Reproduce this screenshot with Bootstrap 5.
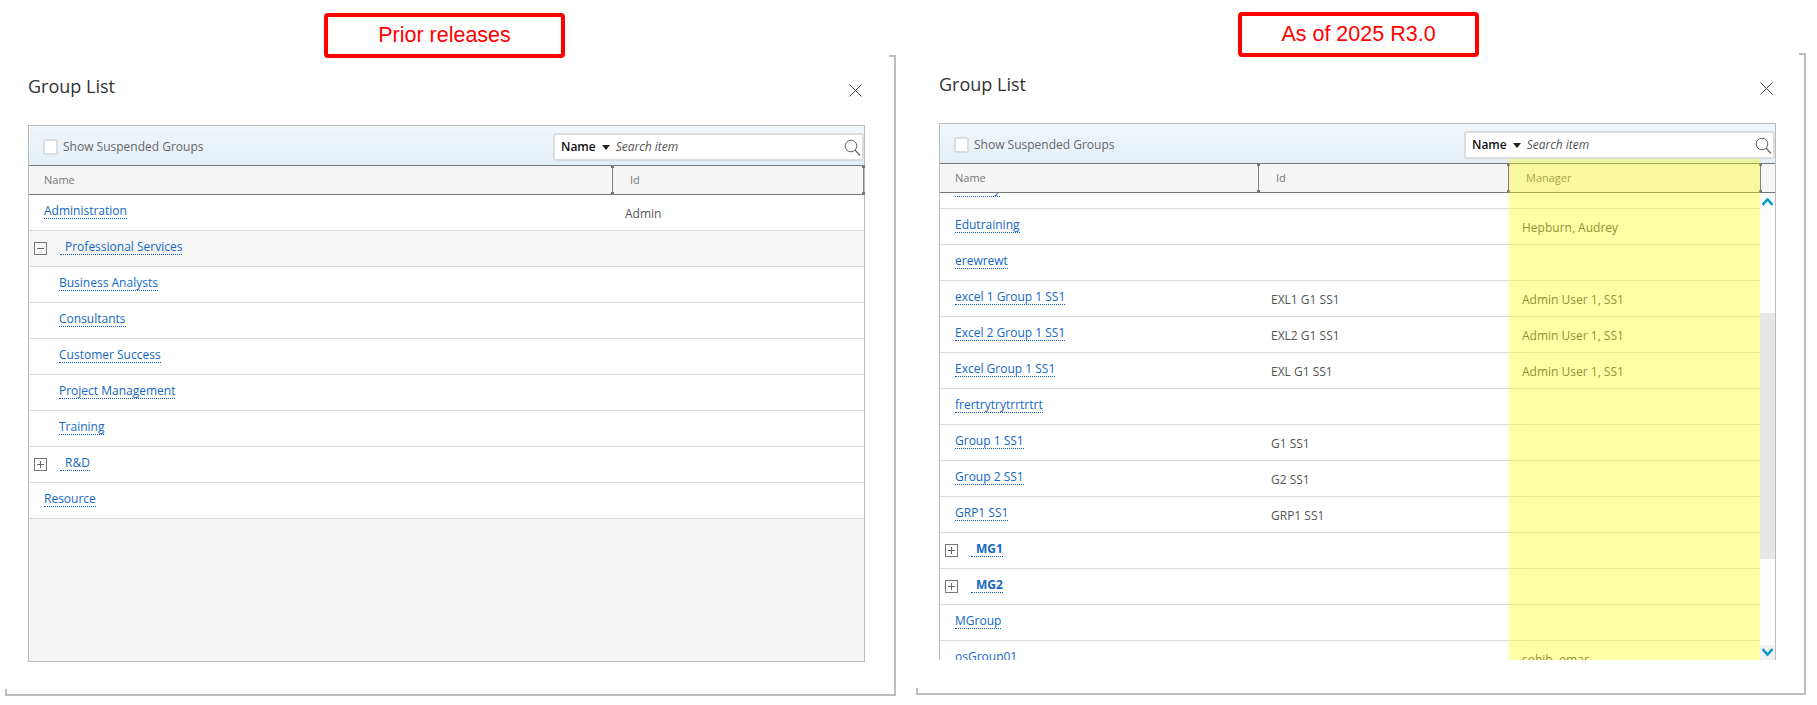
<!DOCTYPE html>
<html lang="en">
<head>
<meta charset="utf-8">
<title>Group List</title>
<link href="https://cdn.jsdelivr.net/npm/bootstrap@5.3.0/dist/css/bootstrap.min.css" rel="stylesheet">
<style>
body{background:#fff;font-family:"Open Sans",sans-serif;font-size:12px;color:#555;overflow:hidden;margin:0}
.shots{height:705px}
.shot{position:relative;flex:none;width:891px}
.shot-a{margin-left:5px}
.shot-b{margin-left:20px;width:890px}
.tag-box{width:241px;height:45px;border:4px solid #f00;border-radius:4px;color:#f00;font:21.5px "Liberation Sans",sans-serif}
.shot-a .tag-box{margin:13px 0 -3px 319px}
.shot-b .tag-box{margin:12px 0 -4px 322px}
.frame{position:relative;border-right:2px solid #bdbdbd;border-bottom:2px solid #bdbdbd}
.frame::before{content:"";position:absolute;right:-2px;top:0;width:7px;height:2px;background:#bdbdbd}
.frame::after{content:"";position:absolute;left:0;bottom:-2px;width:2px;height:7px;background:#bdbdbd}
.shot-a .frame{padding:0 29px 32px 23px}
.shot-b .frame{padding:0 28px 33px 23px}
.head-row{height:70px;padding:21px 0 0 0}
.dlg-title{font-size:18px;line-height:20px;color:#333;margin:0;font-weight:400}
.x-btn{width:13px;height:13px;margin:8px 3px 0 0;line-height:0;background:none}
.grid-box{height:537px;border:1px solid #bbb;background:#f5f5f5}
.tools{height:39px;padding:0 0 0 14px;background:linear-gradient(#f1f7fb,#e3eff7)}
.tools .form-check-input{width:15px;height:16px;margin:0 5px 0 0;border:2px solid #ddd;border-radius:2px;background-color:#fff;flex:none}
.tools-label{color:#666;font-size:12px;margin-top:2px}
.finder{width:311px;height:28px;margin-top:3px;background:#fff;border:2px solid #dcdcdc;border-radius:3px;padding:0 1px 0 6px}
.finder-field{font-weight:600;color:#111;font-size:12px}
.finder-caret{width:0;height:0;border:4px solid transparent;border-top:5px solid #222;border-bottom:0;margin:0 6px 0 6px}
.finder-hint{font-style:italic;color:#555;font-size:12px}
.cols{height:30px;border-top:1px solid #777;border-bottom:1px solid #777;background:#f5f5f5;color:#777;font-size:11px}
.hcell{position:relative;height:100%;padding-left:15px;border-right:1px solid #85798c}
.hcell::before,.hcell::after{content:"";position:absolute;right:-2px;width:3px;height:3px;background:#777}
.hcell::before{top:-1px}
.hcell::after{bottom:-1px}
.c-a1{width:584px}.c-a2{width:251px}
.c-b1{width:319px}.c-b2{width:250px}.c-b3{width:252px}
.cols .hcell.c-b2,.cols .hcell.c-b3,.cols .hcell.c-a2{padding-left:17px}
.g-row{height:36px;background:#fff;border-bottom:1px solid #dcdcdc;flex:none}
.g-row.is-open{background:#f6f6f6}
.g-cell{height:100%;padding-left:15px;flex:none}
.g-cell.indent{padding-left:30px}
.g-cell.tree{padding-left:5px}
.g-cell.c-a2,.g-cell.c-b2,.g-cell.c-b3{padding-left:12px;padding-top:2px;color:#555;font-size:12px}
.g-cell.c-b3{padding-left:13px}
.g-link{color:#1268c4;text-decoration:none;border-bottom:1px dotted #0a5ab8;line-height:15px;margin-bottom:4px;font-size:12px}
.tree .g-link{margin-left:13px;padding-left:5px}
.g-link.strong{font-weight:700}
.expander{width:13px;height:13px;flex:none;display:block}
.viewport{height:467px;overflow:hidden}
.rows{width:820px;flex:none;overflow:hidden}
.rows-inner{margin-top:-20px}
.sbar{width:15px;flex:none;background:#fdfdfd}
.sbar-up{height:16px;background:#fafafa}
.sbar-thumb{height:246px;margin-top:104px;background:#e6e6e6}
.sbar-down{height:15px;margin-top:auto;background:#f0f0f0}
.marker{position:absolute;left:593px;top:159px;width:251px;height:501px;background:rgba(255,255,0,.35);pointer-events:none}
</style>
</head>
<body>
<div class="shots d-flex">

  <section class="shot shot-a">
    <div class="tag-box d-flex align-items-center justify-content-center">Prior releases</div>
    <div class="frame">
      <div class="head-row d-flex justify-content-between align-items-start">
        <h1 class="dlg-title">Group List</h1>
        <button type="button" class="x-btn border-0 p-0" aria-label="Close"><svg width="13" height="13" viewBox="0 0 13 13"><path d="M.5.5l12 12M12.5.5l-12 12" stroke="#444" stroke-width="1" fill="none"/></svg></button>
      </div>
      <div class="grid-box">
        <div class="tools d-flex align-items-center justify-content-between">
          <label class="d-flex align-items-center tools-label"><input type="checkbox" class="form-check-input">Show Suspended Groups</label>
          <div class="finder d-flex align-items-center">
            <span class="finder-field">Name</span><span class="finder-caret"></span><span class="finder-hint">Search item</span>
            <svg class="ms-auto" width="17" height="17" viewBox="0 0 17 17"><circle cx="7" cy="7" r="5.8" fill="none" stroke="#666"/><path d="M11 11l5 5.5" stroke="#666" stroke-width="1.2"/></svg>
          </div>
        </div>
        <div class="cols d-flex">
          <div class="hcell c-a1 d-flex align-items-center">Name</div>
          <div class="hcell c-a2 d-flex align-items-center">Id</div>
        </div>
        <div class="g-row d-flex"><div class="g-cell c-a1 d-flex align-items-center"><a class="g-link" href="#">Administration</a></div><div class="g-cell c-a2 d-flex align-items-center">Admin</div></div>
        <div class="g-row is-open d-flex"><div class="g-cell tree c-a1 d-flex align-items-center"><svg class="expander" viewBox="0 0 13 13"><rect x=".5" y=".5" width="12" height="12" fill="none" stroke="#777"/><path d="M3 6.5h7" stroke="#666"/></svg><a class="g-link" href="#">Professional Services</a></div></div>
        <div class="g-row d-flex"><div class="g-cell indent c-a1 d-flex align-items-center"><a class="g-link" href="#">Business Analysts</a></div></div>
        <div class="g-row d-flex"><div class="g-cell indent c-a1 d-flex align-items-center"><a class="g-link" href="#">Consultants</a></div></div>
        <div class="g-row d-flex"><div class="g-cell indent c-a1 d-flex align-items-center"><a class="g-link" href="#">Customer Success</a></div></div>
        <div class="g-row d-flex"><div class="g-cell indent c-a1 d-flex align-items-center"><a class="g-link" href="#">Project Management</a></div></div>
        <div class="g-row d-flex"><div class="g-cell indent c-a1 d-flex align-items-center"><a class="g-link" href="#">Training</a></div></div>
        <div class="g-row d-flex"><div class="g-cell tree c-a1 d-flex align-items-center"><svg class="expander" viewBox="0 0 13 13"><rect x=".5" y=".5" width="12" height="12" fill="none" stroke="#777"/><path d="M3 6.5h7M6.5 3v7" stroke="#666"/></svg><a class="g-link" href="#">R&amp;D</a></div></div>
        <div class="g-row d-flex"><div class="g-cell c-a1 d-flex align-items-center"><a class="g-link" href="#">Resource</a></div></div>
      </div>
    </div>
  </section>

  <section class="shot shot-b">
    <div class="tag-box d-flex align-items-center justify-content-center">As of 2025 R3.0</div>
    <div class="frame">
      <div class="head-row d-flex justify-content-between align-items-start">
        <h1 class="dlg-title">Group List</h1>
        <button type="button" class="x-btn border-0 p-0" aria-label="Close"><svg width="13" height="13" viewBox="0 0 13 13"><path d="M.5.5l12 12M12.5.5l-12 12" stroke="#444" stroke-width="1" fill="none"/></svg></button>
      </div>
      <div class="grid-box">
        <div class="tools d-flex align-items-center justify-content-between">
          <label class="d-flex align-items-center tools-label"><input type="checkbox" class="form-check-input">Show Suspended Groups</label>
          <div class="finder d-flex align-items-center">
            <span class="finder-field">Name</span><span class="finder-caret"></span><span class="finder-hint">Search item</span>
            <svg class="ms-auto" width="17" height="17" viewBox="0 0 17 17"><circle cx="7" cy="7" r="5.8" fill="none" stroke="#666"/><path d="M11 11l5 5.5" stroke="#666" stroke-width="1.2"/></svg>
          </div>
        </div>
        <div class="cols d-flex">
          <div class="hcell c-b1 d-flex align-items-center">Name</div>
          <div class="hcell c-b2 d-flex align-items-center">Id</div>
          <div class="hcell c-b3 d-flex align-items-center">Manager</div>
        </div>
        <div class="viewport d-flex">
          <div class="rows">
            <div class="rows-inner">
              <div class="g-row d-flex"><div class="g-cell c-b1 d-flex align-items-center"><a class="g-link" href="#">Delivery</a></div></div>
              <div class="g-row d-flex"><div class="g-cell c-b1 d-flex align-items-center"><a class="g-link" href="#">Edutraining</a></div><div class="g-cell c-b2"></div><div class="g-cell c-b3 d-flex align-items-center">Hepburn, Audrey</div></div>
              <div class="g-row d-flex"><div class="g-cell c-b1 d-flex align-items-center"><a class="g-link" href="#">erewrewt</a></div></div>
              <div class="g-row d-flex"><div class="g-cell c-b1 d-flex align-items-center"><a class="g-link" href="#">excel 1 Group 1 SS1</a></div><div class="g-cell c-b2 d-flex align-items-center">EXL1 G1 SS1</div><div class="g-cell c-b3 d-flex align-items-center">Admin User 1, SS1</div></div>
              <div class="g-row d-flex"><div class="g-cell c-b1 d-flex align-items-center"><a class="g-link" href="#">Excel 2 Group 1 SS1</a></div><div class="g-cell c-b2 d-flex align-items-center">EXL2 G1 SS1</div><div class="g-cell c-b3 d-flex align-items-center">Admin User 1, SS1</div></div>
              <div class="g-row d-flex"><div class="g-cell c-b1 d-flex align-items-center"><a class="g-link" href="#">Excel Group 1 SS1</a></div><div class="g-cell c-b2 d-flex align-items-center">EXL G1 SS1</div><div class="g-cell c-b3 d-flex align-items-center">Admin User 1, SS1</div></div>
              <div class="g-row d-flex"><div class="g-cell c-b1 d-flex align-items-center"><a class="g-link" href="#">frertrytrytrrtrtrt</a></div></div>
              <div class="g-row d-flex"><div class="g-cell c-b1 d-flex align-items-center"><a class="g-link" href="#">Group 1 SS1</a></div><div class="g-cell c-b2 d-flex align-items-center">G1 SS1</div></div>
              <div class="g-row d-flex"><div class="g-cell c-b1 d-flex align-items-center"><a class="g-link" href="#">Group 2 SS1</a></div><div class="g-cell c-b2 d-flex align-items-center">G2 SS1</div></div>
              <div class="g-row d-flex"><div class="g-cell c-b1 d-flex align-items-center"><a class="g-link" href="#">GRP1 SS1</a></div><div class="g-cell c-b2 d-flex align-items-center">GRP1 SS1</div></div>
              <div class="g-row d-flex"><div class="g-cell tree c-b1 d-flex align-items-center"><svg class="expander" viewBox="0 0 13 13"><rect x=".5" y=".5" width="12" height="12" fill="none" stroke="#777"/><path d="M3 6.5h7M6.5 3v7" stroke="#666"/></svg><a class="g-link strong" href="#">MG1</a></div></div>
              <div class="g-row d-flex"><div class="g-cell tree c-b1 d-flex align-items-center"><svg class="expander" viewBox="0 0 13 13"><rect x=".5" y=".5" width="12" height="12" fill="none" stroke="#777"/><path d="M3 6.5h7M6.5 3v7" stroke="#666"/></svg><a class="g-link strong" href="#">MG2</a></div></div>
              <div class="g-row d-flex"><div class="g-cell c-b1 d-flex align-items-center"><a class="g-link" href="#">MGroup</a></div></div>
              <div class="g-row d-flex"><div class="g-cell c-b1 d-flex align-items-center"><a class="g-link" href="#">osGroup01</a></div><div class="g-cell c-b2"></div><div class="g-cell c-b3 d-flex align-items-center">sohib, omar</div></div>
            </div>
          </div>
          <div class="sbar d-flex flex-column">
            <div class="sbar-up d-flex align-items-center justify-content-center"><svg width="11" height="9" viewBox="0 0 11 9"><path d="M.5 8L5.5 2.5 10.5 8" fill="none" stroke="#0d9dc4" stroke-width="2.6"/></svg></div>
            <div class="sbar-thumb"></div>
            <div class="sbar-down d-flex align-items-center justify-content-center"><svg width="11" height="9" viewBox="0 0 11 9"><path d="M.5 1L5.5 6.5 10.5 1" fill="none" stroke="#0d9dc4" stroke-width="2.6"/></svg></div>
          </div>
        </div>
      </div>
    </div>
    <div class="marker"></div>
  </section>

</div>
<script src="https://cdn.jsdelivr.net/npm/bootstrap@5.3.0/dist/js/bootstrap.bundle.min.js"></script>
</body>
</html>
